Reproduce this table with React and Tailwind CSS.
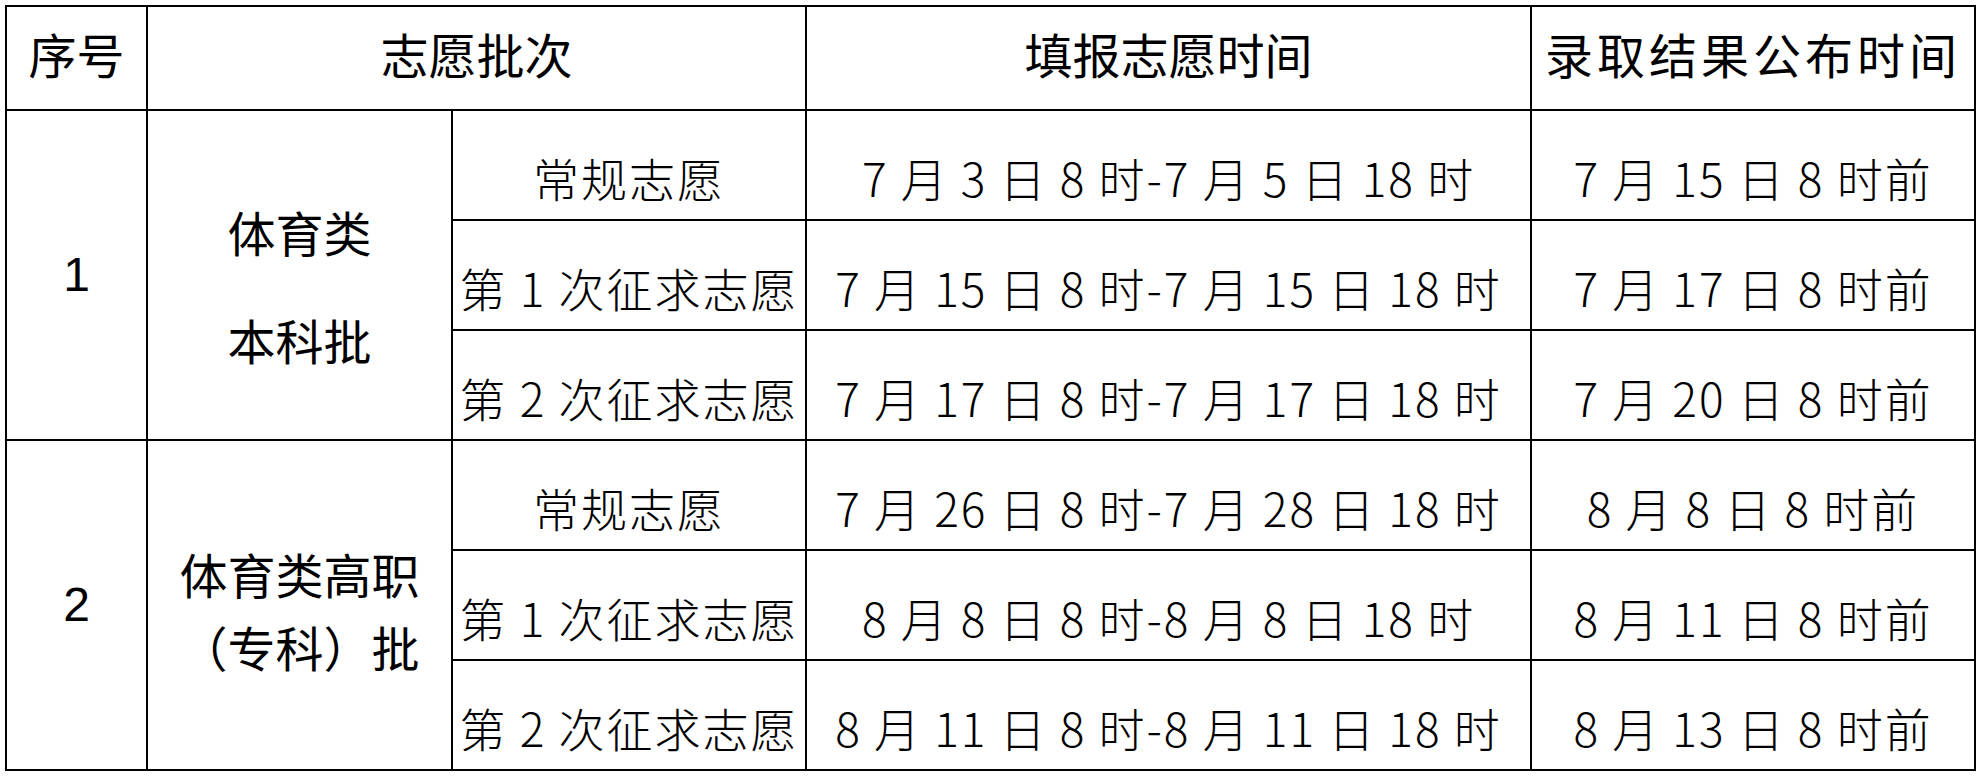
import React from "react";

const GROUPS = [
  {
    no: "1",
    name: ["体育类", "本科批"],
    lead: "leading-[108px] pt-[30px]",
    rows: [
      ["常规志愿", "7 月 3 日 8 时-7 月 5 日 18 时", "7 月 15 日 8 时前"],
      ["第 1 次征求志愿", "7 月 15 日 8 时-7 月 15 日 18 时", "7 月 17 日 8 时前"],
      ["第 2 次征求志愿", "7 月 17 日 8 时-7 月 17 日 18 时", "7 月 20 日 8 时前"],
    ],
  },
  {
    no: "2",
    name: ["体育类高职", "（专科）批"],
    lead: "leading-[73px] pt-[18px]",
    rows: [
      ["常规志愿", "7 月 26 日 8 时-7 月 28 日 18 时", "8 月 8 日 8 时前"],
      ["第 1 次征求志愿", "8 月 8 日 8 时-8 月 8 日 18 时", "8 月 11 日 8 时前"],
      ["第 2 次征求志愿", "8 月 11 日 8 时-8 月 11 日 18 时", "8 月 13 日 8 时前"],
    ],
  },
];

// 黑体-like cells (header + left columns)
const HEI = "font-['Liberation_Sans','Noto_Sans_CJK_SC',sans-serif] font-normal text-[48px] text-black";
// 仿宋-like body cells
const FANG =
  "font-['Liberation_Sans_Narrow','Noto_Sans_CJK_SC',sans-serif] font-light text-[46px] tracking-[2px] text-black whitespace-nowrap leading-none pt-[24px]";

const CELL = "border-2 border-black text-center align-middle p-0";

export default function App() {
  return (
    <div className="w-[1980px] h-[779px] bg-white pl-[5px] pt-[5px] overflow-hidden">
      <table className="table-fixed border-collapse w-[1969px]">
        <colgroup>
          <col className="w-[141px]" />
          <col className="w-[305px]" />
          <col className="w-[354px]" />
          <col className="w-[725px]" />
          <col className="w-[444px]" />
        </colgroup>
        <thead>
          <tr className="h-[104px]">
            <th className={`${CELL} ${HEI}`}>序号</th>
            <th colSpan={2} className={`${CELL} ${HEI}`}>
              志愿批次
            </th>
            <th className={`${CELL} ${HEI}`}>填报志愿时间</th>
            <th className={`${CELL} ${HEI} tracking-[4px] whitespace-nowrap`}>录取结果公布时间</th>
          </tr>
        </thead>
        <tbody>
          {GROUPS.map((g) =>
            g.rows.map((r, i) => (
              <tr key={g.no + "-" + i} className="h-[110px]">
                {i === 0 && (
                  <>
                    <td rowSpan={3} className={`${CELL} ${HEI} text-[46px]`}>
                      {g.no}
                    </td>
                    <td rowSpan={3} className={`${CELL} ${HEI}`}>
                      <div className={`flex flex-col items-center ${g.lead}`}>
                        {g.name.map((n) => (
                          <span key={n}>{n}</span>
                        ))}
                      </div>
                    </td>
                  </>
                )}
                <td className={CELL}>
                  <div className={FANG}>{r[0]}</div>
                </td>
                <td className={CELL}>
                  <div className={FANG}>{r[1]}</div>
                </td>
                <td className={CELL}>
                  <div className={FANG}>{r[2]}</div>
                </td>
              </tr>
            ))
          )}
        </tbody>
      </table>
    </div>
  );
}
